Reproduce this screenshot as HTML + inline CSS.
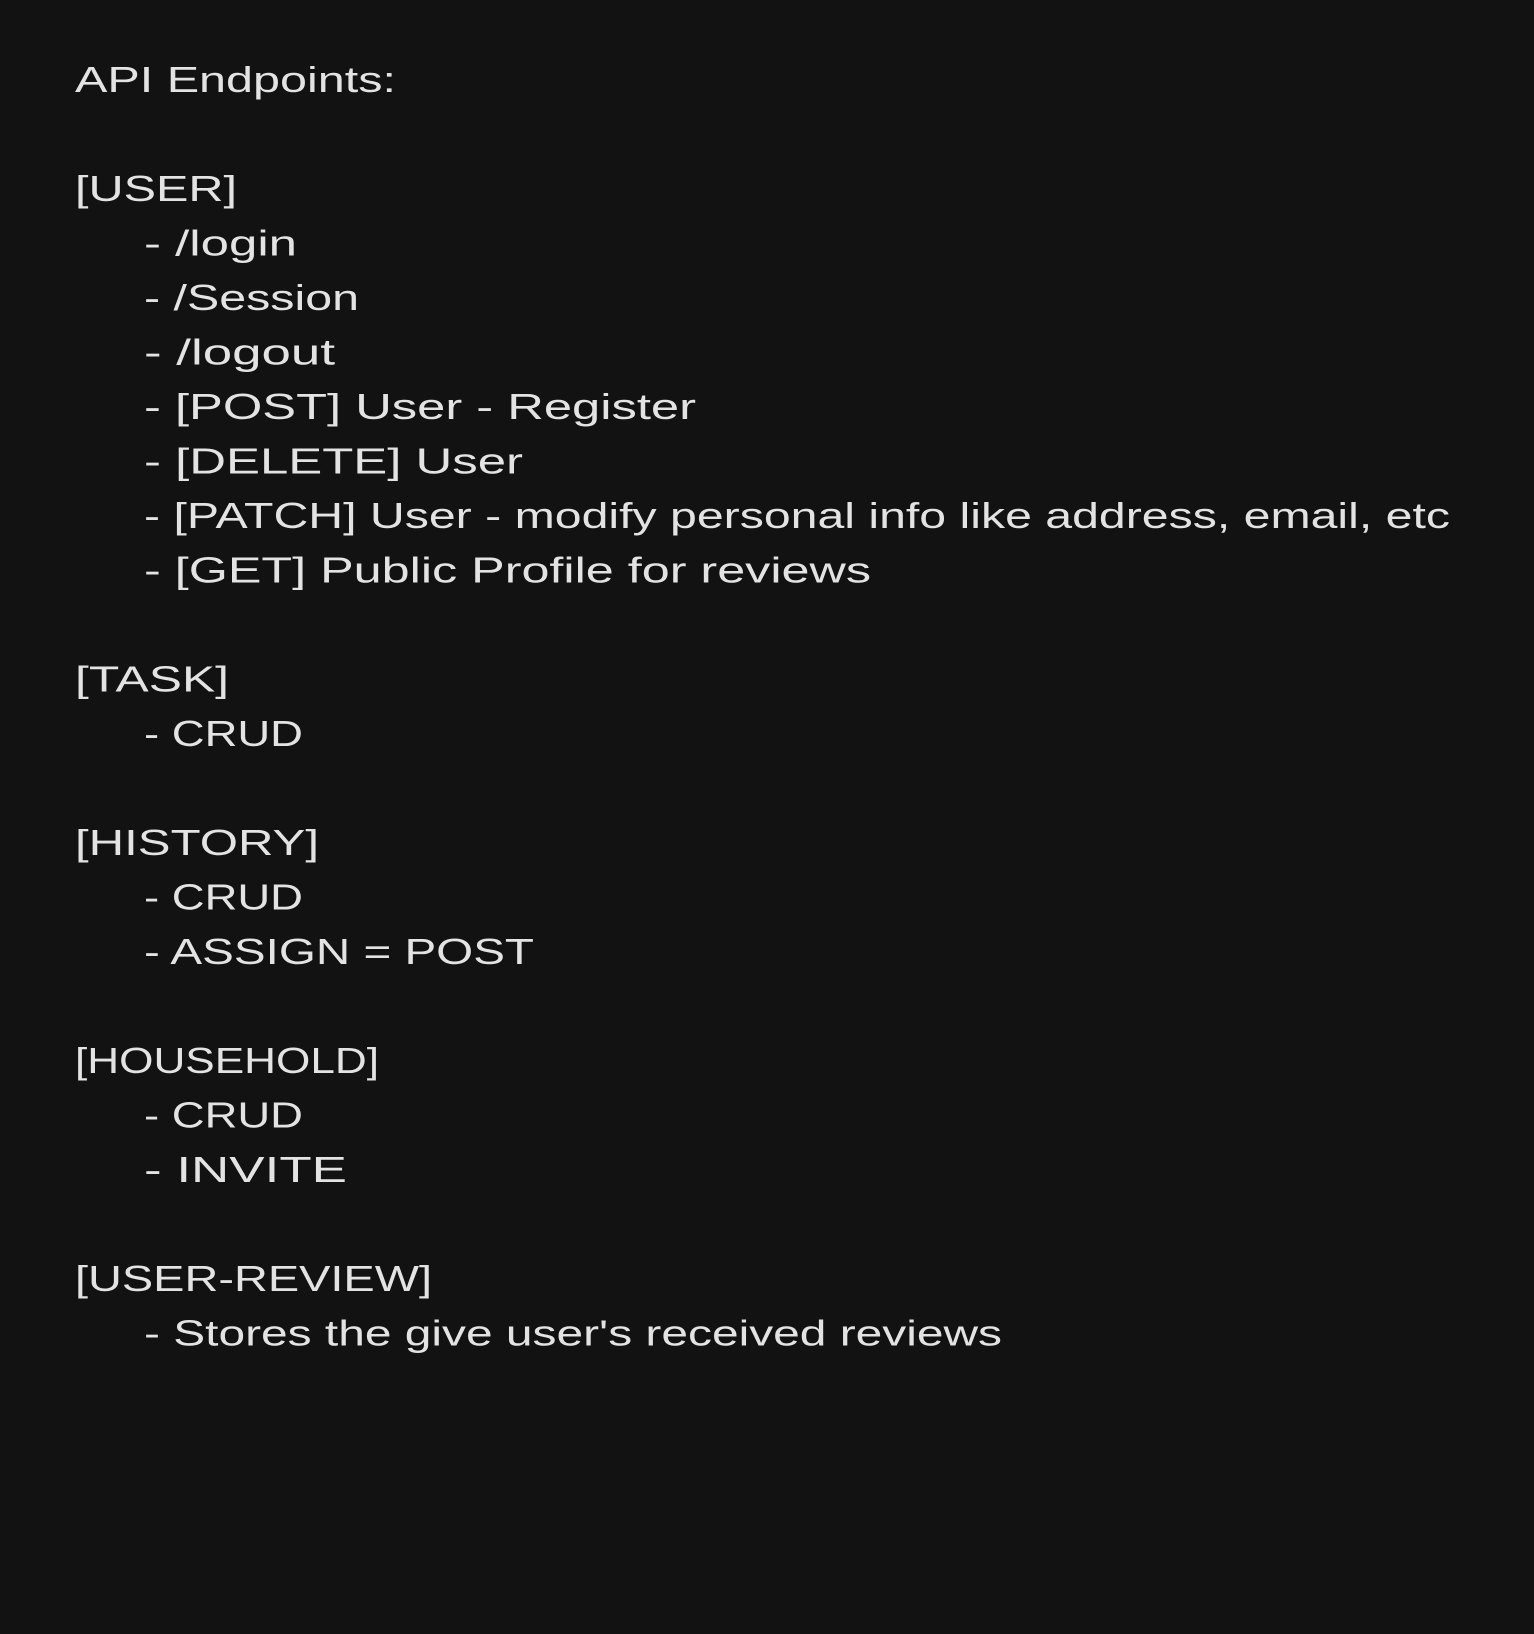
<!DOCTYPE html>
<html><head><meta charset="utf-8"><style>
html,body{margin:0;padding:0;background:#121212;}
svg{display:block}
text{font-family:"Liberation Sans",sans-serif;font-size:36px;fill:#e3e3e3;}
</style></head><body>
<svg width="1534" height="1634" xmlns="http://www.w3.org/2000/svg">
<rect width="1534" height="1634" fill="#121212"/>
<g transform="translate(0,-2)">
<text x="75" y="94" textLength="321" lengthAdjust="spacingAndGlyphs">API Endpoints:</text>
<text x="75" y="203" textLength="162" lengthAdjust="spacingAndGlyphs">[USER]</text>
<text x="144" y="257.5" textLength="153" lengthAdjust="spacingAndGlyphs">- /login</text>
<text x="144" y="312" textLength="215" lengthAdjust="spacingAndGlyphs">- /Session</text>
<text x="144" y="366.5" textLength="191" lengthAdjust="spacingAndGlyphs">- /logout</text>
<text x="144" y="421" textLength="552" lengthAdjust="spacingAndGlyphs">- [POST] User - Register</text>
<text x="144" y="475.5" textLength="379" lengthAdjust="spacingAndGlyphs">- [DELETE] User</text>
<text x="144" y="530" textLength="1306" lengthAdjust="spacingAndGlyphs">- [PATCH] User - modify personal info like address, email, etc</text>
<text x="144" y="584.5" textLength="727" lengthAdjust="spacingAndGlyphs">- [GET] Public Profile for reviews</text>
<text x="75" y="693.5" textLength="154" lengthAdjust="spacingAndGlyphs">[TASK]</text>
<text x="144" y="748" textLength="159" lengthAdjust="spacingAndGlyphs">- CRUD</text>
<text x="75" y="857" textLength="244" lengthAdjust="spacingAndGlyphs">[HISTORY]</text>
<text x="144" y="911.5" textLength="159" lengthAdjust="spacingAndGlyphs">- CRUD</text>
<text x="144" y="966" textLength="390" lengthAdjust="spacingAndGlyphs">- ASSIGN = POST</text>
<text x="75" y="1075" textLength="304" lengthAdjust="spacingAndGlyphs">[HOUSEHOLD]</text>
<text x="144" y="1129.5" textLength="159" lengthAdjust="spacingAndGlyphs">- CRUD</text>
<text x="144" y="1184" textLength="203" lengthAdjust="spacingAndGlyphs">- INVITE</text>
<text x="75" y="1293" textLength="357" lengthAdjust="spacingAndGlyphs">[USER-REVIEW]</text>
<text x="144" y="1347.5" textLength="858" lengthAdjust="spacingAndGlyphs">- Stores the give user's received reviews</text>
</g>
</svg>
</body></html>
